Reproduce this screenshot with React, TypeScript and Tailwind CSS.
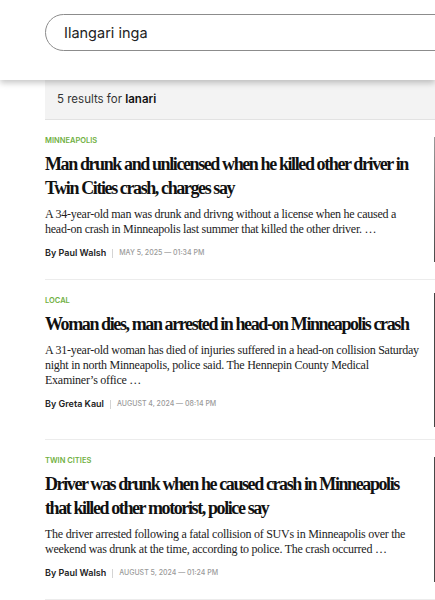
import React from "react";

type Article = {
  category: string;
  title: string;
  snippet: string;
  author: string;
  date: string;
  imgH: string;
  imgColor: string;
};

const articles: Article[] = [
  {
    category: "Minneapolis",
    title: "Man drunk and unlicensed when he killed other driver in Twin Cities crash, charges say",
    snippet:
      "A 34-year-old man was drunk and drivng without a license when he caused a head-on crash in Minneapolis last summer that killed the other driver. …",
    author: "By Paul Walsh",
    date: "May 5, 2025 — 01:34 PM",
    imgH: "h-[125px]",
    imgColor: "bg-gradient-to-b from-[#9a9a9a] to-[#4a4a4a]",
  },
  {
    category: "Local",
    title: "Woman dies, man arrested in head-on Minneapolis crash",
    snippet:
      "A 31-year-old woman has died of injuries suffered in a head-on collision Saturday night in north Minneapolis, police said. The Hennepin County Medical Examiner’s office …",
    author: "By Greta Kaul",
    date: "August 4, 2024 — 08:14 PM",
    imgH: "h-[134px]",
    imgColor: "bg-[#454545]",
  },
  {
    category: "Twin Cities",
    title: "Driver was drunk when he caused crash in Minneapolis that killed other motorist, police say",
    snippet:
      "The driver arrested following a fatal collision of SUVs in Minneapolis over the weekend was drunk at the time, according to police. The crash occurred …",
    author: "By Paul Walsh",
    date: "August 5, 2024 — 01:24 PM",
    imgH: "h-[125px]",
    imgColor: "bg-[#474747]",
  },
];

const sans = "font-['Inter','Liberation_Sans',sans-serif]";
const serif = "font-['Liberation_Serif','Times_New_Roman',serif]";

export default function App() {
  return (
    <div className="w-[435px] h-[600px] overflow-hidden bg-white relative">
      <header className="relative z-10 h-[80px] bg-white shadow-[0_3px_6px_rgba(0,0,0,0.22)] pl-[45px] pt-[14px]">
        <div
          className={`w-[520px] h-[37px] rounded-full border border-[#8c8c8c] flex items-center pl-[18px] text-[14.5px] text-[#222] ${sans}`}
        >
          Ilangari inga
        </div>
      </header>
      <main className="pl-[45px] w-[700px]">
        <div
          className={`h-[40px] bg-[#f3f3f3] border-b border-[#e2e2e2] flex items-center pl-[12px] text-[11.5px] text-[#333] ${sans}`}
        >
          <span>5 results for&nbsp;</span>
          <span className="font-semibold text-[#111]">lanari</span>
        </div>
        {articles.map((a, i) => (
          <article key={i} className="h-[160px] border-b border-[#ececec] flex items-center">
            <div className="w-[378px] self-start pt-[16px] shrink-0">
              <div
                className={`text-[7.5px] leading-[10px] font-semibold uppercase text-[#6fb041] ${sans}`}
              >
                {a.category}
              </div>
              <h2
                className={`mt-[6px] w-[368px] text-[18px] leading-[24px] font-bold tracking-[-1.4px] text-[#111] ${serif}`}
              >
                {a.title}
              </h2>
              <p className={`mt-[7px] text-[12px] leading-[15px] tracking-[-0.25px] text-[#222] ${serif}`}>
                {a.snippet}
              </p>
              <div className={`mt-[10px] flex items-center h-[12px] ${sans}`}>
                <span className="text-[9px] font-semibold text-[#222]">{a.author}</span>
                <span className="mx-[6px] w-px h-[9px] bg-[#d4d4d4]" />
                <span className="text-[7px] font-medium uppercase text-[#9a9a9a]">{a.date}</span>
              </div>
            </div>
            <div className="w-[11px] shrink-0" />
            <div className={`w-[200px] ${a.imgH} ${a.imgColor} shrink-0`} />
          </article>
        ))}
      </main>
    </div>
  );
}
